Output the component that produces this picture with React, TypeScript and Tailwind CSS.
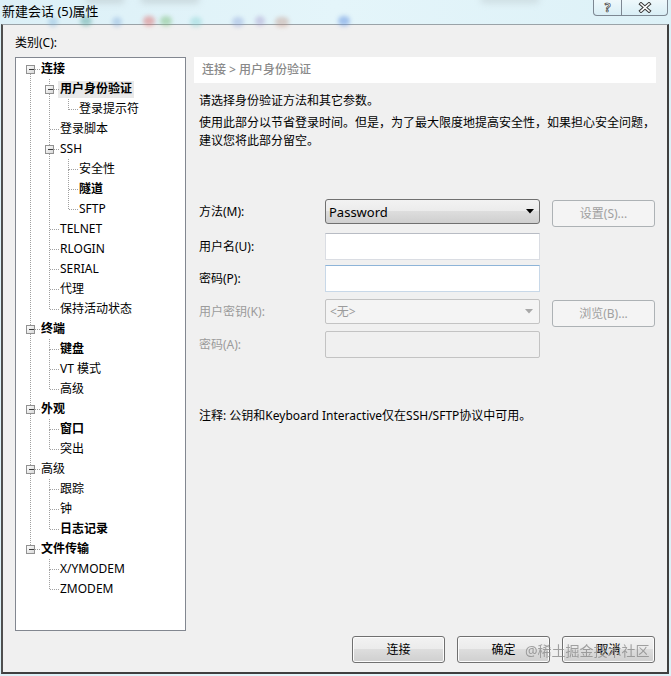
import React from "react";

type Item = { t: string; l: 0 | 1 | 2; box?: boolean; b?: boolean; sel?: boolean };

const items: Item[] = [
  { t: "连接", l: 0, box: true, b: true },
  { t: "用户身份验证", l: 1, box: true, b: true, sel: true },
  { t: "登录提示符", l: 2 },
  { t: "登录脚本", l: 1 },
  { t: "SSH", l: 1, box: true },
  { t: "安全性", l: 2 },
  { t: "隧道", l: 2, b: true },
  { t: "SFTP", l: 2 },
  { t: "TELNET", l: 1 },
  { t: "RLOGIN", l: 1 },
  { t: "SERIAL", l: 1 },
  { t: "代理", l: 1 },
  { t: "保持活动状态", l: 1 },
  { t: "终端", l: 0, box: true, b: true },
  { t: "键盘", l: 1, b: true },
  { t: "VT 模式", l: 1 },
  { t: "高级", l: 1 },
  { t: "外观", l: 0, box: true, b: true },
  { t: "窗口", l: 1, b: true },
  { t: "突出", l: 1 },
  { t: "高级", l: 0, box: true },
  { t: "跟踪", l: 1 },
  { t: "钟", l: 1 },
  { t: "日志记录", l: 1, b: true },
  { t: "文件传输", l: 0, box: true, b: true },
  { t: "X/YMODEM", l: 1 },
  { t: "ZMODEM", l: 1 },
];

const indent: Record<number, string> = {
  0: "pl-[25px]",
  1: "pl-[44px]",
  2: "pl-[63px]",
};

function TreeLines() {
  const lx = [14.5, 33.5, 52.5];
  const cy = (i: number) => 11.5 + 20 * i;
  const els: React.ReactNode[] = [];
  items.forEach((it, i) => {
    const L = it.l;
    let next = -1;
    for (let j = i + 1; j < items.length; j++) {
      if (items[j].l < L) break;
      if (items[j].l === L) {
        next = j;
        break;
      }
    }
    if (next >= 0) {
      els.push(<line key={`v${i}`} x1={lx[L]} x2={lx[L]} y1={cy(i)} y2={cy(next)} />);
    }
    if (L > 0 && items[i - 1].l === L - 1) {
      els.push(<line key={`f${i}`} x1={lx[L]} x2={lx[L]} y1={1 + 20 * i} y2={cy(i)} />);
    }
    els.push(<line key={`h${i}`} x1={lx[L]} x2={lx[L] + 9} y1={cy(i)} y2={cy(i)} />);
  });
  const boxes = items.map((it, i) =>
    it.box ? (
      <g key={`b${i}`}>
        <rect x={lx[it.l] - 4} y={cy(i) - 4} width={8} height={8} fill="url(#bx)" stroke="#919191" strokeWidth={1} />
        <line x1={lx[it.l] - 2} x2={lx[it.l] + 3} y1={cy(i)} y2={cy(i)} stroke="#3c3c3c" strokeWidth={1} />
      </g>
    ) : null
  );
  return (
    <svg className="absolute left-0 top-0 pointer-events-none" width={169} height={572} shapeRendering="crispEdges">
      <defs>
        <linearGradient id="bx" x1="0" y1="0" x2="1" y2="1">
          <stop offset="0" stopColor="#ffffff" />
          <stop offset="1" stopColor="#d6d6d6" />
        </linearGradient>
      </defs>
      <g stroke="#a0a0a0" strokeWidth={1} strokeDasharray="1 1">
        {els}
      </g>
      {boxes}
    </svg>
  );
}

function Tree() {
  return (
    <div className="w-[171px] h-[574px] border border-[#828790] bg-white shrink-0">
      <div className="relative w-full h-full pt-[1px]">
        <TreeLines />
        {items.map((it, i) => (
          <div key={i} className={`h-[20px] flex items-center ${indent[it.l]}`}>
            {it.sel ? (
              <span className="h-[17px] flex items-center bg-[#e9e9e9] px-[2px] -ml-[2px] leading-[16px] font-bold whitespace-nowrap">
                {it.t}
              </span>
            ) : (
              <span className={`leading-[16px] whitespace-nowrap ${it.b ? "font-bold" : ""}`}>{it.t}</span>
            )}
          </div>
        ))}
      </div>
    </div>
  );
}

function WinButton({ children }: { children: React.ReactNode }) {
  return (
    <div className="w-[93px] h-[27px] rounded-[3px] border border-[#707070] bg-[linear-gradient(#f2f2f2,#ebebeb_50%,#dddddd_50%,#cfcfcf)] flex items-center justify-center shadow-[inset_0_0_0_1px_#fcfcfc]">
      <span className="leading-[16px]">{children}</span>
    </div>
  );
}

function DisabledButton({ children }: { children: React.ReactNode }) {
  return (
    <div className="ml-[12px] mt-[1px] w-[103px] h-[27px] rounded-[3px] border border-[#adb2b5] bg-[#f4f4f4] flex items-center justify-center text-[#a0a0a0]">
      <span className="leading-[16px]">{children}</span>
    </div>
  );
}

function Label({ children, disabled }: { children: React.ReactNode; disabled?: boolean }) {
  return (
    <div className={`w-[131px] pl-[5px] h-[25px] flex items-center shrink-0 ${disabled ? "text-[#9b9b9b]" : ""}`}>
      <span className="leading-[16px]">{children}</span>
    </div>
  );
}

export default function App() {
  return (
    <div className="w-[671px] h-[676px] relative overflow-hidden bg-[linear-gradient(90deg,#dcf0f7,#e4f5fa_50%,#ddf1f7)] font-['Noto_Sans','Noto_Sans_CJK_SC',sans-serif] text-[12px] text-black flex flex-col">
      {/* title bar */}
      <div className="h-[24px] relative shrink-0 flex items-start">
        <div className="absolute left-[85px] top-[-6px] w-[40px] h-[10px] rounded-full bg-[#b8c4c8] opacity-50 blur-[3px]" />
        <div className="absolute left-[140px] top-[-6px] w-[60px] h-[10px] rounded-full bg-[#b8c4c8] opacity-50 blur-[3px]" />
        <div className="absolute left-[480px] top-[-6px] w-[60px] h-[10px] rounded-full bg-[#b8c4c8] opacity-40 blur-[3px]" />
        <div className="absolute left-[48px] top-[17px] w-[10px] h-[10px] rounded-full bg-[#7fb0d8] opacity-40 blur-[2px]" />
        <div className="absolute left-[80px] top-[16px] w-[12px] h-[10px] rounded-full bg-[#5fa8a0] opacity-50 blur-[2px]" />
        <div className="absolute left-[112px] top-[17px] w-[10px] h-[10px] rounded-full bg-[#7fa8d8] opacity-40 blur-[2px]" />
        <div className="absolute left-[143px] top-[16px] w-[12px] h-[10px] rounded-full bg-[#e07070] opacity-50 blur-[2px]" />
        <div className="absolute left-[160px] top-[16px] w-[12px] h-[10px] rounded-full bg-[#80c080] opacity-50 blur-[2px]" />
        <div className="absolute left-[190px] top-[17px] w-[12px] h-[10px] rounded-full bg-[#80d0d0] opacity-40 blur-[2px]" />
        <div className="absolute left-[232px] top-[17px] w-[12px] h-[10px] rounded-full bg-[#8aa0d8] opacity-40 blur-[2px]" />
        <div className="absolute left-[255px] top-[16px] w-[10px] h-[10px] rounded-full bg-[#a090c8] opacity-40 blur-[2px]" />
        <div className="absolute left-[275px] top-[17px] w-[14px] h-[10px] rounded-full bg-[#c09080] opacity-40 blur-[2px]" />
        <div className="absolute left-[338px] top-[16px] w-[12px] h-[10px] rounded-full bg-[#6090e0] opacity-50 blur-[2px]" />
        <span className="relative ml-[2px] mt-[2px] text-[13px] leading-[18px] whitespace-nowrap">新建会话 (5)属性</span>
        <div className="absolute right-[3px] top-0 flex h-[16px] rounded-b-[4px] border border-t-0 border-[#7d8792] bg-[linear-gradient(#eef8fb,#d9eef5)] overflow-hidden">
          <div className="w-[28px] h-full flex items-center justify-center border-r border-[#7d8792]">
            <span className="text-[12px] leading-[14px] font-bold text-white [-webkit-text-stroke:0.7px_#3a3a3a]">?</span>
          </div>
          <div className="w-[45px] h-full flex items-center justify-center">
            <svg width="14" height="11" viewBox="0 0 14 11">
              <path d="M3 2 L11 9 M11 2 L3 9" stroke="#3a3a3a" strokeWidth="3.6" strokeLinecap="square" />
              <path d="M3 2 L11 9 M11 2 L3 9" stroke="#ffffff" strokeWidth="1.6" strokeLinecap="square" />
            </svg>
          </div>
        </div>
      </div>

      {/* client area */}
      <div className="ml-[1px] mr-[2px] h-[650px] shrink-0 border-l-2 border-r-2 border-b-2 border-t border-l-[#4f4f4f] border-r-[#3f3f3f] border-b-[#3f3f3f] border-t-[#9aa3a8] bg-[#f0f0f0] flex flex-col pl-[12px] pr-[11px]">
        <div className="mt-[10px] mb-[6px] h-[16px] leading-[16px]">类别(C):</div>
        <div className="flex h-[574px] gap-[8px]">
          <Tree />
          <div className="w-[462px] flex flex-col">
            <div className="h-[26px] bg-white flex items-center pl-[8px] text-[#8a8a8a]">
              <span className="leading-[16px] font-medium">连接 &gt; 用户身份验证</span>
            </div>
            <div className="mt-[9px] pl-[5px] leading-[17px]">请选择身份验证方法和其它参数。</div>
            <div className="mt-[5px] pl-[5px] leading-[18px] whitespace-nowrap">
              使用此部分以节省登录时间。但是，为了最大限度地提高安全性，如果担心安全问题，
              <br />
              建议您将此部分留空。
            </div>

            <div className="mt-[49px] flex flex-col">
              <div className="h-[34px] flex items-start">
                <Label>方法(M):</Label>
                <div className="w-[215px] h-[25px] rounded-[3px] border border-[#707070] bg-[linear-gradient(#f2f2f2,#ebebeb_50%,#dddddd_50%,#cfcfcf)] flex items-center justify-between pl-[3px] pr-[5px]">
                  <span className="text-[13px] leading-[16px]">Password</span>
                  <svg width="8" height="5" viewBox="0 0 8 5">
                    <path d="M0 0 H8 L4 4.5 Z" fill="#000" />
                  </svg>
                </div>
                <DisabledButton>设置(S)...</DisabledButton>
              </div>
              <div className="h-[32px] flex items-start">
                <div className="h-[27px] flex items-center">
                  <Label>用户名(U):</Label>
                </div>
                <div className="w-[215px] h-[27px] border border-[#dadde3] border-t-[#b8bcc4] bg-white" />
              </div>
              <div className="h-[34px] flex items-start">
                <div className="h-[27px] flex items-center">
                  <Label>密码(P):</Label>
                </div>
                <div className="w-[215px] h-[27px] border border-[#c8d8e8] border-t-[#8db4d8] bg-white" />
              </div>
              <div className="h-[32px] flex items-start">
                <Label disabled>用户密钥(K):</Label>
                <div className="w-[215px] h-[25px] rounded-[2px] border border-[#c3c3c3] bg-[#f4f4f4] flex items-center justify-between pl-[4px] pr-[6px] text-[#9b9b9b]">
                  <span className="leading-[16px]">&lt;无&gt;</span>
                  <svg width="8" height="5" viewBox="0 0 8 5">
                    <path d="M0 0 H8 L4 4.5 Z" fill="#a8a8a8" />
                  </svg>
                </div>
                <DisabledButton>浏览(B)...</DisabledButton>
              </div>
              <div className="h-[27px] flex items-start">
                <div className="h-[27px] flex items-center">
                  <Label disabled>密码(A):</Label>
                </div>
                <div className="w-[215px] h-[27px] rounded-[2px] border border-[#c3c3c3] bg-[#f0f0f0]" />
              </div>
            </div>

            <div className="mt-[49px] pl-[5px] leading-[17px] whitespace-nowrap">
              注释: 公钥和Keyboard Interactive仅在SSH/SFTP协议中可用。
            </div>
          </div>
        </div>
        <div className="mt-[5px] flex justify-end gap-[12px] pr-[1px]">
          <WinButton>连接</WinButton>
          <WinButton>确定</WinButton>
          <WinButton>取消</WinButton>
        </div>
      </div>

      <span className="absolute left-[525px] top-[642px] text-[14px] leading-[18px] text-[#8c8c8c] opacity-80 whitespace-nowrap pointer-events-none">
        @稀土掘金技术社区
      </span>
    </div>
  );
}
